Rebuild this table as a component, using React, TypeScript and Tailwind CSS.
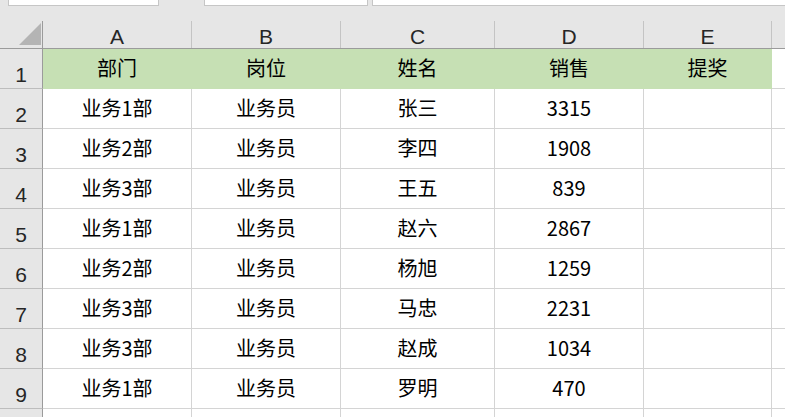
import React from "react";

const colW = ["w-[149px]", "w-[149px]", "w-[154px]", "w-[149px]", "w-[128px]"];
const letters = ["A", "B", "C", "D", "E"];
const header = ["部门", "岗位", "姓名", "销售", "提奖"];
const rows = [
  ["业务1部", "业务员", "张三", "3315"],
  ["业务2部", "业务员", "李四", "1908"],
  ["业务3部", "业务员", "王五", "839"],
  ["业务1部", "业务员", "赵六", "2867"],
  ["业务2部", "业务员", "杨旭", "1259"],
  ["业务3部", "业务员", "马忠", "2231"],
  ["业务3部", "业务员", "赵成", "1034"],
  ["业务1部", "业务员", "罗明", "470"],
];

const cjk = { fontFamily: '"Noto Sans CJK SC", "Noto Sans", sans-serif' };
const lat = { fontFamily: '"Liberation Sans", Arial, sans-serif' };

function RowHead({ n }: { n: string }) {
  return (
    <div
      className="w-[43px] shrink-0 h-full flex items-end justify-center pb-[3px] bg-[#e6e6e6] border-r border-b border-r-[#9b9b9b] border-b-[#bdbdbd] text-[21px] leading-none text-[#262626]"
      style={lat}
    >
      {n}
    </div>
  );
}

export default function App() {
  return (
    <div className="w-[785px] h-[417px] overflow-hidden bg-white flex flex-col">
      {/* top bar */}
      <div className="h-[21px] shrink-0 bg-[#e6e6e6] flex items-start">
        <div className="ml-[8px] w-[151px] h-[6px] bg-white border-x border-b border-[#c6c6c6]" />
        <div className="ml-[45px] w-[164px] h-[6px] bg-white border-x border-b border-[#c6c6c6]" />
        <div className="ml-[4px] flex-1 h-[6px] bg-white border-l border-b border-[#c6c6c6]" />
      </div>
      {/* column header */}
      <div className="h-[28px] shrink-0 flex bg-[#e6e6e6] border-b border-[#9b9b9b]">
        <div className="w-[43px] shrink-0 h-full border-r border-[#9b9b9b] pl-[19px] pt-[2px]">
          <svg width="22" height="22" viewBox="0 0 22 22">
            <polygon points="0,22 22,22 22,0" fill="#b4b4b4" />
          </svg>
        </div>
        {letters.map((l, i) => (
          <div
            key={l}
            className={`${colW[i]} shrink-0 h-full border-r border-[#c4c4c4] flex items-end justify-center pb-[1px] text-[21px] leading-none text-[#262626]`}
            style={lat}
          >
            {l}
          </div>
        ))}
        <div className="flex-1" />
      </div>
      {/* row 1 */}
      <div className="h-[40px] shrink-0 flex">
        <RowHead n="1" />
        {header.map((h, i) => (
          <div
            key={h}
            className={`${colW[i]} shrink-0 h-full bg-[#c6e0b4] border-r border-b border-[#c6e0b4] flex items-center justify-center pb-[2px] text-[20px] text-black`}
            style={cjk}
          >
            {h}
          </div>
        ))}
        <div className="flex-1 h-full border-b border-[#d4d4d4]" />
      </div>
      {rows.map((r, ri) => (
        <div key={ri} className="h-[40px] shrink-0 flex">
          <RowHead n={String(ri + 2)} />
          {[...r, ""].map((c, i) => (
            <div
              key={i}
              className={`${colW[i]} shrink-0 h-full border-r border-b border-[#d4d4d4] flex items-center justify-center pb-[2px] text-[20px] text-black`}
              style={cjk}
            >
              {c}
            </div>
          ))}
          <div className="flex-1 h-full border-b border-[#d4d4d4]" />
        </div>
      ))}
      <div className="h-[40px] shrink-0 flex">
        <RowHead n="" />
        {colW.map((w, i) => (
          <div key={i} className={`${w} shrink-0 h-full border-r border-b border-[#d4d4d4]`} />
        ))}
        <div className="flex-1 h-full border-b border-[#d4d4d4]" />
      </div>
    </div>
  );
}
